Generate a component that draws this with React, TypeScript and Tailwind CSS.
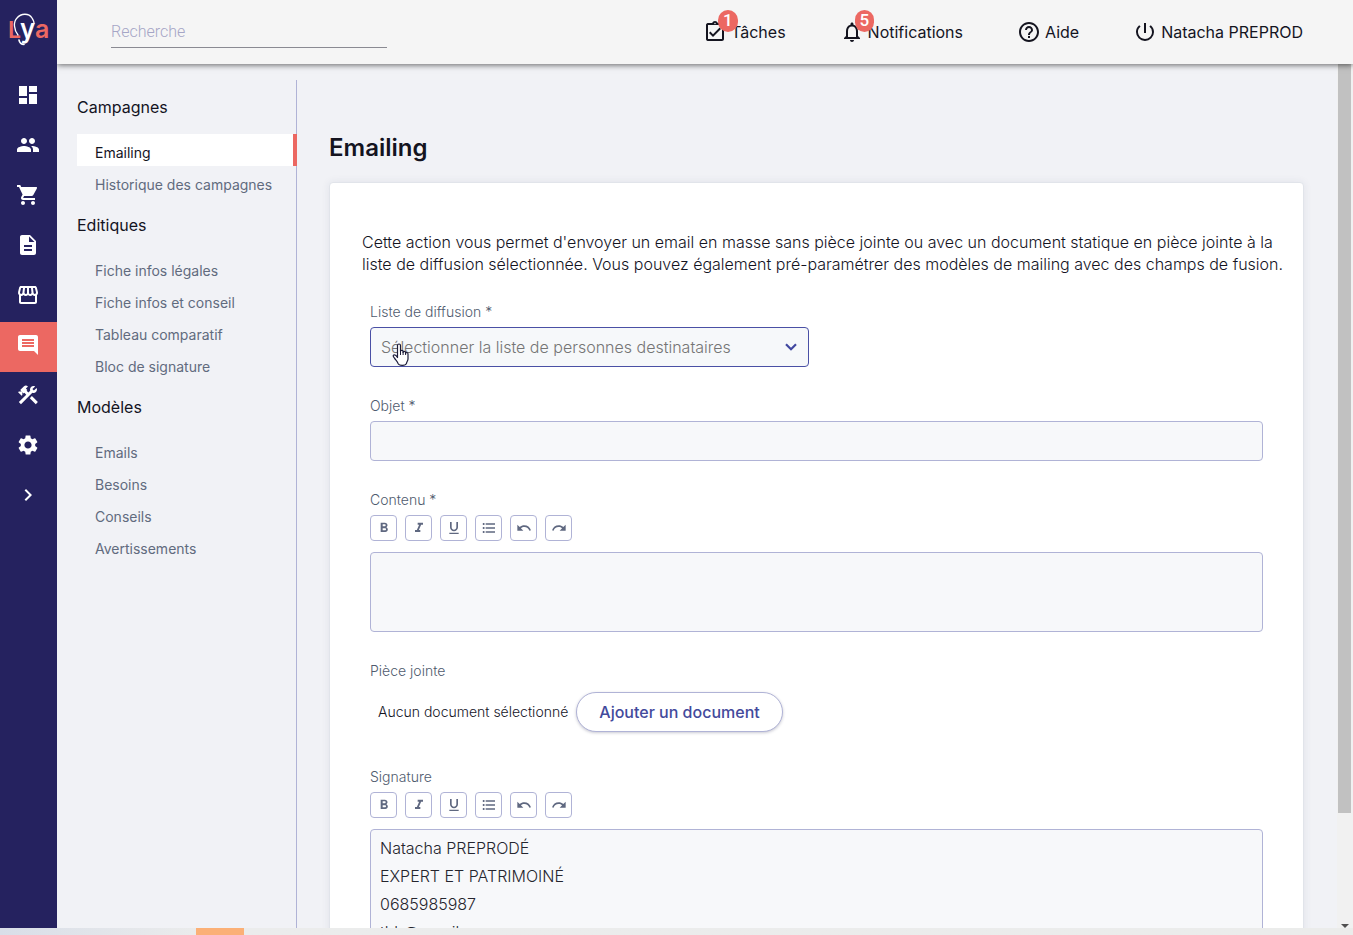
import type { ReactNode } from "react";
import type { IconType } from "react-icons";
import {
  MdChevronRight,
  MdComment,
  MdConstruction,
  MdDashboard,
  MdDescription,
  MdFormatBold,
  MdFormatItalic,
  MdFormatListBulleted,
  MdFormatUnderlined,
  MdHelpOutline,
  MdNotificationsNone,
  MdOutlineAssignmentTurnedIn,
  MdOutlineStorefront,
  MdPeople,
  MdPowerSettingsNew,
  MdRedo,
  MdSettings,
  MdShoppingCart,
  MdUndo,
} from "react-icons/md";

const railItems: { label: string; icon: IconType; active?: boolean }[] = [
  { label: "Tableau de bord", icon: MdDashboard },
  { label: "Contacts", icon: MdPeople },
  { label: "Panier", icon: MdShoppingCart },
  { label: "Documents", icon: MdDescription },
  { label: "Boutique", icon: MdOutlineStorefront },
  { label: "Communication", icon: MdComment, active: true },
  { label: "Outils", icon: MdConstruction },
  { label: "Paramètres", icon: MdSettings },
  { label: "Déplier", icon: MdChevronRight },
];

const sections = [
  { title: "Campagnes", items: ["Emailing", "Historique des campagnes"] },
  {
    title: "Editiques",
    items: ["Fiche infos légales", "Fiche infos et conseil", "Tableau comparatif", "Bloc de signature"],
  },
  { title: "Modèles", items: ["Emails", "Besoins", "Conseils", "Avertissements"] },
];

const tools: { label: string; icon: IconType }[] = [
  { label: "Gras", icon: MdFormatBold },
  { label: "Italique", icon: MdFormatItalic },
  { label: "Souligné", icon: MdFormatUnderlined },
  { label: "Liste", icon: MdFormatListBulleted },
  { label: "Annuler", icon: MdUndo },
  { label: "Rétablir", icon: MdRedo },
];

const signature = "Natacha PREPRODÉ\nEXPERT ET PATRIMOINÉ\n0685985987\nthb@gmail.com";

function Logo() {
  return (
    <svg viewBox="0 0 44 36" className="h-9 w-11" role="img" aria-label="Lya">
      <g fontFamily="Inter, sans-serif" fontWeight="600">
        <text x="1" y="26" fontSize="23" fill="#ec6862">L</text>
        <text x="28" y="26" fontSize="25" fill="#ec6862">a</text>
        <text x="13" y="26" fontSize="26" fill="#ffffff">y</text>
      </g>
      <path
        d="M11 23C7 18 6 10 10 6c4-5 12-5 15 0 1 2 2 3 2 5"
        fill="none"
        stroke="#ffffff"
        strokeWidth="1.3"
        strokeLinecap="round"
      />
      <path d="M12 28c.5 2.500 2.500 4.500 5 4.500" fill="none" stroke="#ffffff" strokeWidth="1.600" strokeLinecap="round" />
    </svg>
  );
}

function HeaderLink({ icon: Icon, label, badge }: { icon: IconType; label: string; badge?: string }) {
  return (
    <a href="#" className="flex items-center gap-1">
      <span className="relative">
        <Icon className="size-6" />
        {badge && (
          <span className="absolute -top-2.5 left-[15px] flex h-[22px] min-w-[18px] items-center justify-center rounded-full bg-[#ec6862] px-[5px] font-['Roboto',sans-serif] text-[17px] font-medium text-white">
            {badge}
          </span>
        )}
      </span>
      {label}
    </a>
  );
}

function Toolbar() {
  return (
    <div className="mb-[11px] flex gap-2">
      {tools.map(({ label, icon: Icon }) => (
        <button
          key={label}
          type="button"
          aria-label={label}
          className="flex h-[26px] w-[27px] items-center justify-center rounded border border-[#b0b3d6] bg-white text-[#5f6880]"
        >
          <Icon className="size-4" />
        </button>
      ))}
    </div>
  );
}

function Label({ htmlFor, children }: { htmlFor: string; children: ReactNode }) {
  return (
    <label htmlFor={htmlFor} className="mb-[5px] block text-sm font-light text-[#4f5b6e]">
      {children}
    </label>
  );
}

export default function App() {
  return (
    <div lang="fr" className="flex h-screen flex-col overflow-hidden bg-[#f1f2f6] font-['Inter',sans-serif] text-[#14141f]">
      <div className="flex min-h-0 flex-1">
        <nav aria-label="Principal" className="flex w-[57px] shrink-0 flex-col bg-[#25225f] text-white">
          <a href="#" className="flex h-[72px] justify-center pt-3">
            <Logo />
          </a>
          {railItems.map(({ label, icon: Icon, active }) => (
            <a
              key={label}
              href="#"
              aria-label={label}
              className={
                active
                  ? "flex h-[50px] items-center bg-[#ec6862] pb-1 pl-4"
                  : "flex h-[50px] items-center pb-1 pl-4"
              }
            >
              <Icon className="size-6" />
            </a>
          ))}
        </nav>

        <div className="flex min-w-0 flex-1 flex-col">
          <header className="relative z-10 flex h-16 shrink-0 items-center justify-between bg-[#f5f5f5] pr-[50px] pl-[54px] shadow-[0_1px_6px_rgba(0,0,0,0.6)] [clip-path:inset(0_0_-16px_0)]">
            <input
              type="search"
              aria-label="Recherche"
              placeholder="Recherche"
              className="h-8 w-[276px] border-b border-[#8a8a92] bg-transparent font-['Roboto',sans-serif] font-light outline-none placeholder:text-[#a5a5c6]"
            />
            <div className="flex gap-[54px] text-base">
              <HeaderLink icon={MdOutlineAssignmentTurnedIn} label="Tâches" badge="1" />
              <HeaderLink icon={MdNotificationsNone} label="Notifications" badge="5" />
              <HeaderLink icon={MdHelpOutline} label="Aide" />
              <HeaderLink icon={MdPowerSettingsNew} label="Natacha PREPROD" />
            </div>
          </header>

          <div className="flex min-h-0 flex-1">
            <aside className="mt-4 w-60 shrink-0 border-r border-[#b0b3d6] pl-5">
              {sections.map((section) => (
                <section key={section.title}>
                  <h2 className="flex h-[54px] items-center text-base">{section.title}</h2>
                  <ul>
                    {section.items.map((item) => (
                      <li key={item}>
                        <a
                          href="#"
                          className={
                            item === "Emailing"
                              ? "-mr-px flex h-8 items-center border-r-4 border-[#ec6862] bg-white pt-1.5 pl-[18px] text-sm"
                              : "flex h-8 items-center pt-1.5 pl-[18px] text-sm text-[#616b7e]"
                          }
                        >
                          {item}
                        </a>
                      </li>
                    ))}
                  </ul>
                </section>
              ))}
            </aside>

            <main className="min-w-0 flex-1 overflow-hidden pt-[66px] pr-[33px] pl-8">
              <h1 className="mb-4 text-2xl leading-9 font-semibold">Emailing</h1>
              <form className="rounded border border-[#e1e4ea] bg-white px-8 pt-12 pb-8 shadow-[0_0_8px_rgba(40,50,90,0.08)]">
                <p className="-mr-4 mb-[27px] text-base leading-[22px] font-light">
                  Cette action vous permet d'envoyer un email en masse sans pièce jointe ou avec un document statique en
                  pièce jointe à la liste de diffusion sélectionnée. Vous pouvez également pré-paramétrer des modèles de
                  mailing avec des champs de fusion.
                </p>

                <div className="px-2">
                  <div className="mb-[29px] grid grid-cols-2 gap-4">
                    <div>
                      <Label htmlFor="liste">Liste de diffusion *</Label>
                      <div className="relative">
                        <select
                          id="liste"
                          defaultValue=""
                          className="h-10 w-full appearance-none rounded border border-[#4a50a5] bg-[#f6f8fa] px-2.5 text-base font-light text-[#757575] outline-none"
                        >
                          <option value="">Sélectionner la liste de personnes destinataires</option>
                        </select>
                        <svg viewBox="0 0 12 8" className="pointer-events-none absolute top-4 right-3 h-2 w-3">
                          <path d="M1 1.3l5 5 5-5" fill="none" stroke="#4148a0" strokeWidth="2.2" />
                        </svg>
                        <svg viewBox="0 0 18 24" className="pointer-events-none absolute top-4 left-[22px] h-6 w-[18px]">
                          <path
                            d="M5.5 14.5V2.5c0-2 3-2 3 0v6c0-1.600 2.600-1.500 2.600.3v.6c0-1.500 2.500-1.400 2.500.3v.7c0-1.300 2.400-1.200 2.400.5v5c0 2-1.500 3-1.500 4.500-1 2.600-7.500 2.600-8.500 0-.5-2-2.500-3.500-3.500-5.300-1.500-1.500-1.600-2.600-.8-3.100 1.300-.7 2.800.8 3.800 2.500z"
                            fill="#ffffff"
                            stroke="#1b1b38"
                            strokeWidth="1.200"
                            strokeLinejoin="round"
                          />
                          <path d="M8.500 8v4M11.100 9v3M13.600 10v2" stroke="#1b1b38" strokeWidth="1" />
                        </svg>
                      </div>
                    </div>
                  </div>

                  <div className="mb-[29px]">
                    <Label htmlFor="objet">Objet *</Label>
                    <input
                      id="objet"
                      type="text"
                      className="block h-10 w-full rounded border border-[#b0b3d6] bg-[#f7f8fa] px-[9px] outline-none"
                    />
                  </div>

                  <div className="mb-[29px]">
                    <Label htmlFor="contenu">Contenu *</Label>
                    <Toolbar />
                    <textarea
                      id="contenu"
                      className="block h-20 w-full resize-none rounded border border-[#b0b3d6] bg-[#f7f8fa] px-[9px] outline-none"
                    />
                  </div>

                  <div className="mb-[35px]">
                    <Label htmlFor="piece">Pièce jointe</Label>
                    <div className="flex items-center gap-2 pt-1.5 pl-2">
                      <span className="text-sm font-light">Aucun document sélectionné</span>
                      <button
                        id="piece"
                        type="button"
                        className="h-10 rounded-full border border-[#b0b3d6] bg-white px-[22px] text-base font-medium text-[#434a9c] shadow-[0_1px_3px_rgba(40,40,80,0.25)]"
                      >
                        Ajouter un document
                      </button>
                    </div>
                  </div>

                  <Label htmlFor="signature">Signature</Label>
                  <Toolbar />
                  <textarea
                    id="signature"
                    defaultValue={signature}
                    className="block h-40 w-full resize-none rounded border border-[#b0b3d6] bg-[#f7f8fa] px-[9px] py-1 text-base leading-7 font-light text-[#25252e] outline-none"
                  />
                </div>
              </form>
            </main>

            <div aria-hidden="true" className="flex w-4 shrink-0 flex-col items-center justify-between bg-[#f1f1f1] pr-0.5 pl-px">
              <div className="h-[86.7%] w-full bg-[#c1c1c1]" />
              <svg viewBox="0 0 8 4" className="h-1 w-2">
                <path d="M0 0h8L4 4z" fill="#505050" />
              </svg>
            </div>
          </div>
        </div>
      </div>
      <footer className="flex h-[7px] shrink-0 bg-linear-to-r from-[#d9dee8] from-0% via-[#ebecec] via-15% to-[#ebeceb] pl-[196px]">
        <div className="w-12 bg-[#fbb077]" />
      </footer>
    </div>
  );
}
